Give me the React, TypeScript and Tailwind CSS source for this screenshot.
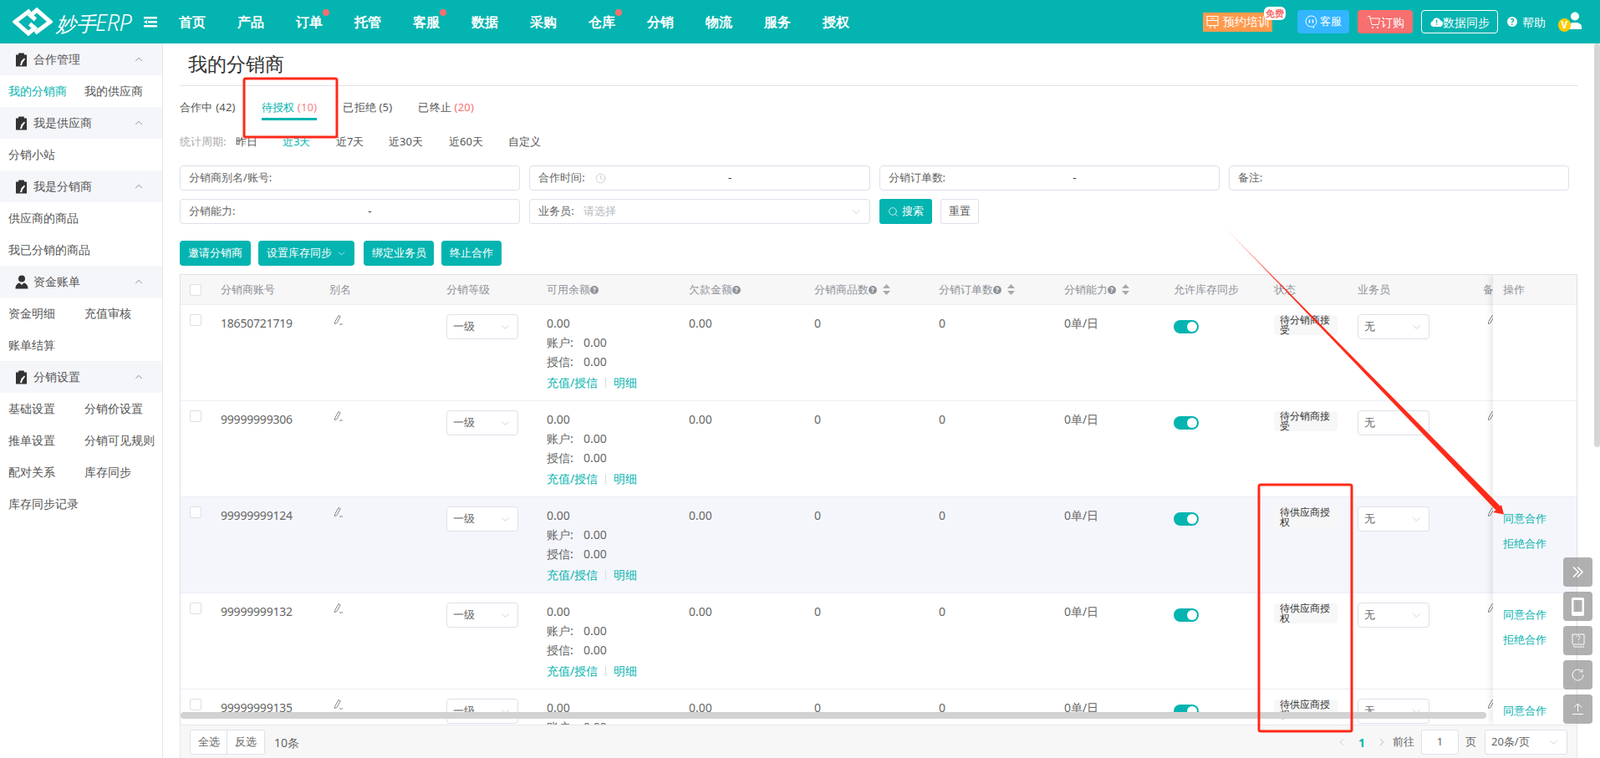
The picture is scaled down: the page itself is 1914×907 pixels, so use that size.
import { ChevronDown, ChevronLeft, ChevronRight, ChevronUp, Search, Clock } from "lucide-react";

const NAV = [
  { t: "首页" }, { t: "产品" }, { t: "订单", dot: true }, { t: "托管" }, { t: "客服", dot: true }, { t: "数据" },
  { t: "采购" }, { t: "仓库", dot: true }, { t: "分销" }, { t: "物流" }, { t: "服务" }, { t: "授权" },
];

const SIDE = [
  { title: "合作管理", icon: "clip", rows: [["我的分销商", "我的供应商"]] },
  { title: "我是供应商", icon: "clip", rows: [["分销小站"]] },
  { title: "我是分销商", icon: "clip", rows: [["供应商的商品"], ["我已分销的商品"]] },
  { title: "资金账单", icon: "user", rows: [["资金明细", "充值审核"], ["账单结算"]] },
  { title: "分销设置", icon: "clip", rows: [["基础设置", "分销价设置"], ["推单设置", "分销可见规则"], ["配对关系", "库存同步"], ["库存同步记录"]] },
];

const ROWS = [
  { id: "18650721719", status: "待分销商接受", ops: false },
  { id: "99999999306", status: "待分销商接受", ops: false },
  { id: "99999999124", status: "待供应商授权", ops: true, hover: true },
  { id: "99999999132", status: "待供应商授权", ops: true },
  { id: "99999999135", status: "待供应商授权", ops: true },
];

const ClipIcon = () => (
  <svg width="15" height="17" viewBox="0 0 15 17">
    <rect x="1" y="2.500" width="13" height="14" fill="#333" />
    <rect x="4" y="0.500" width="7" height="4" rx="1" fill="#333" />
    <path d="M6 15l1.500-5L11 6.500l1 1.200L9 12l-1 3.200z" fill="#fff" />
  </svg>
);

const UserIcon = () => (
  <svg width="16" height="17" viewBox="0 0 16 17">
    <circle cx="8" cy="4.500" r="4" fill="#333" />
    <path d="M0.500 16.500c0-4 2-6.500 5-7L8 12l2.500-2.500c3 .5 5 3 5 7z" fill="#333" />
  </svg>
);

const Pencil = () => (
  <svg width="12" height="13" viewBox="0 0 12 13" fill="none" stroke="#777" strokeWidth="0.9">
    <path d="M1.500 9.500L6 1.500l2.200 1.300-4.400 7.800-2.300.9z" />
    <path d="M7 12h4" />
  </svg>
);

const Help = () => (
  <span className="inline-flex h-[10px] w-[10px] items-center justify-center rounded-full bg-[#8f9299] text-[8px] font-bold leading-none text-white">?</span>
);

const Sort = () => (
  <svg className="ml-[7px]" width="9" height="13" viewBox="0 0 9 13" fill="#a6a9ad">
    <path d="M4.500 0L9 5H0z" />
    <path d="M4.500 13L0 8h9z" />
  </svg>
);

const SmallSelect = ({ label, w }: { label: string; w: string }) => (
  <div className={`flex h-[30px] items-center justify-between rounded-[4px] border border-[#dfe0ea] bg-white pl-[7px] pr-[7px] text-[13px] text-[#666] ${w}`}>
    <span>{label}</span>
    <ChevronDown size={15} strokeWidth={1} className="text-[#b5b8c0]" />
  </div>
);

const Box = ({ children, className = "" }: { children?: React.ReactNode; className?: string }) => (
  <div className={`flex h-[30px] items-center rounded-[4px] border border-[#dfe0ea] bg-white pl-[10px] text-[13px] text-[#666] ${className}`}>
    {children}
  </div>
);

const Dash = () => <span className="flex-1 pr-[18px] text-center text-[#333]">-</span>;

const Tool = ({ children }: { children: React.ReactNode }) => (
  <div className="flex h-[35px] w-[35px] items-center justify-center rounded-[4px] bg-[#8f8f8f]/70">{children}</div>
);

function Header() {
  return (
    <header className="flex h-[52px] shrink-0 items-center bg-[#04b4b0] text-white">
      <svg className="ml-[15px]" width="48" height="34" viewBox="0 0 48 34" fill="none" stroke="#fff" strokeWidth="5">
        <path d="M21 3.500L3 17l16 14 7.500-6.500-6-5" />
        <path d="M27 30.500L45 17 29 3l-7.500 6.500 6 5" />
      </svg>
      <span className="ml-[4px] w-[93px] whitespace-nowrap text-[27px] font-light italic leading-none tracking-[-0.5px]">
        <span className="text-[24px]">妙手</span>ERP
      </span>
      <svg className="ml-[12px]" width="16" height="13" viewBox="0 0 16 13" fill="#fff">
        <rect x="0" y="0" width="16" height="2.500" />
        <rect x="5" y="5" width="11" height="2.500" />
        <rect x="0" y="10" width="16" height="2.500" />
        <path d="M0 6.200L4 4v4.500z" />
      </svg>
      <nav className="ml-[26px] flex gap-[38px]">
        {NAV.map((n) => (
          <span key={n.t} className="relative text-[16px] font-bold leading-[24px]">
            {n.t}
            {n.dot && <i className="absolute right-[-8px] top-[-3px] h-[8px] w-[8px] rounded-full bg-[#f76f6f]" />}
          </span>
        ))}
      </nav>
      <div className="ml-auto mr-[22px] flex items-center">
        <div className="relative flex h-[23px] w-[83px] items-center gap-[5px] bg-[#ff9a4d] pl-[4px] text-[14px] leading-none">
          <svg width="15" height="17" viewBox="0 0 15 17" fill="none" stroke="#fff" strokeWidth="1.100">
            <path d="M1 1.500h13v11H1zM1 6.500h13M4 16l2-3.500M11 16l-2-3.500M5 4h5" />
          </svg>
          <span>预约培训</span>
          <span className="absolute right-[-16px] top-[-7px] flex h-[16px] w-[26px] items-center justify-center rounded-[6px] bg-white text-[11px] font-bold text-[#f76f6f]">免费</span>
        </div>
        <div className="ml-[30px] flex h-[28px] w-[62px] items-center justify-center gap-[3px] rounded-[4px] bg-[#33b5ff] text-[13px]">
          <svg width="15" height="16" viewBox="0 0 15 16" fill="none" stroke="#fff">
            <path d="M7.500 1a6.500 6.500 0 1 0 0 13h2l1 1.500v-2.300A6.500 6.500 0 0 0 7.500 1z" />
            <path d="M5.500 5.500v4M9.500 5.500v4" strokeWidth="1.500" />
          </svg>
          客服
        </div>
        <div className="ml-[10px] flex h-[28px] w-[66px] items-center justify-center rounded-[4px] bg-[#f76f6f] text-[14px]">
          <svg width="17" height="17" viewBox="0 0 17 17" fill="none" stroke="#fff" strokeWidth="1">
            <path d="M1 1.500h2.500l2.500 10h8l1.500-7.500H4.500" />
            <circle cx="7" cy="15" r="0.700" fill="#fff" />
            <circle cx="13" cy="15" r="0.700" fill="#fff" />
          </svg>
          订购
        </div>
        <div className="ml-[10px] flex h-[28px] w-[92px] items-center justify-center rounded-[4px] border border-white text-[14px]">
          <svg width="15" height="12" viewBox="0 0 15 12" fill="#fff">
            <path d="M3.500 12a3.400 3.400 0 0 1-.5-6.700A4.700 4.700 0 0 1 12 4.500 3.800 3.800 0 0 1 11.500 12z" />
            <rect x="7" y="3.500" width="1.300" height="4" fill="#04b4b0" />
            <rect x="7" y="8.500" width="1.300" height="1.300" fill="#04b4b0" />
          </svg>
          数据同步
        </div>
        <span className="ml-[11px] flex h-[12px] w-[12px] items-center justify-center rounded-full bg-white text-[10px] font-bold leading-none text-[#04b4b0]">?</span>
        <span className="ml-[6px] text-[14px]">帮助</span>
        <div className="relative ml-[15px] h-[24px] w-[28px]">
          <svg className="absolute right-0 top-0" width="16" height="21" viewBox="0 0 16 21" fill="#fff">
            <circle cx="8" cy="5.500" r="5" />
            <path d="M0 21v-3c0-3 3-5 8-5s8 2 8 5v3z" />
          </svg>
          <span className="absolute left-0 top-[8px] flex h-[16px] w-[15px] items-center justify-center rounded-full bg-[#ffcc00] text-[12px] font-bold leading-none text-white">V</span>
        </div>
      </div>
    </header>
  );
}

function Sidebar() {
  return (
    <aside className="w-[195px] shrink-0 border-r border-[#e4e5ea] text-[14px] text-[#555]">
      {SIDE.map((s) => (
        <div key={s.title}>
          <div className="flex h-[38px] items-center bg-[#f5f6fa] pl-[18px] pr-[21px]">
            <span className="flex w-[22px] items-center">{s.icon === "clip" ? <ClipIcon /> : <UserIcon />}</span>
            <span className="flex-1 pb-[2px]">{s.title}</span>
            <ChevronUp size={14} strokeWidth={1.2} className="text-[#666]" />
          </div>
          {s.rows.map((r) => (
            <div key={r[0]} className="flex h-[38px] items-center whitespace-nowrap pb-[2px] pl-[10px]">
              {r.map((item, i) => (
                <span key={item} className={`${i === 0 ? "w-[91px]" : ""} ${item === "我的分销商" ? "text-[#04b4b0]" : ""}`}>
                  {item}
                </span>
              ))}
            </div>
          ))}
        </div>
      ))}
    </aside>
  );
}

function Filters() {
  return (
    <div className="mt-[17px] grid grid-cols-4 gap-x-[11px] gap-y-[10px] pr-[10px]">
      <Box>分销商别名/账号:</Box>
      <Box>
        合作时间:
        <Clock size={13} strokeWidth={1} className="ml-[12px] text-[#aaa]" />
        <Dash />
      </Box>
      <Box>
        分销订单数:
        <Dash />
      </Box>
      <Box>备注:</Box>
      <Box>
        分销能力:
        <Dash />
      </Box>
      <Box className="pr-[8px]">
        业务员:
        <span className="ml-[11px] flex-1 text-[#b5b8c0]">请选择</span>
        <ChevronDown size={15} strokeWidth={1} className="text-[#b5b8c0]" />
      </Box>
      <div className="col-span-2 flex gap-[10px]">
        <button className="flex h-[30px] w-[63px] items-center justify-center gap-[4px] rounded-[3px] bg-[#04b4b0] text-[13px] text-white">
          <Search size={13} strokeWidth={1.3} />
          搜索
        </button>
        <button className="h-[30px] w-[46px] rounded-[3px] border border-[#dfe0ea] text-[13px] text-[#555]">重置</button>
      </div>
    </div>
  );
}

function Table() {
  return (
    <div className="relative mt-[10px] h-[539px] overflow-hidden border-x border-t border-[#dfe0ea] text-[13px] text-[#666]">
      <div className="flex h-[36px] items-center border-b border-[#ebeef5] bg-[#f7f7f7] font-medium text-[#909399]">
        <div className="w-[48px] pl-[11px]">
          <span className="block h-[14px] w-[14px] rounded-[2px] border border-[#dcdfe6] bg-white" />
        </div>
        <div className="w-[130px]">分销商账号</div>
        <div className="w-[140px]">别名</div>
        <div className="w-[120px]">分销等级</div>
        <div className="flex w-[170px] items-center">可用余额<Help /></div>
        <div className="flex w-[150px] items-center">欠款金额<Help /></div>
        <div className="flex w-[149px] items-center">分销商品数<Help /><Sort /></div>
        <div className="flex w-[150px] items-center">分销订单数<Help /><Sort /></div>
        <div className="flex w-[131px] items-center">分销能力<Help /><Sort /></div>
        <div className="w-[120px]">允许库存同步</div>
        <div className="w-[100px]">状态</div>
        <div className="w-[150px]">业务员</div>
        <div className="whitespace-nowrap">备注</div>
      </div>

      {ROWS.map((r) => (
        <div key={r.id} className={`flex h-[115px] border-b border-[#ebeef5] ${r.hover ? "bg-[#f5f6fb]" : "bg-white"}`}>
          <div className="w-[48px] pl-[11px] pt-[11px]">
            <span className="block h-[14px] w-[14px] rounded-[2px] border border-[#dcdfe6] bg-white" />
          </div>
          <div className="w-[130px] pt-[10px] text-[14px] leading-[24px] tracking-[-0.2px]">{r.id}</div>
          <div className="w-[140px] pl-[5px] pt-[11px]"><Pencil /></div>
          <div className="w-[120px] pt-[11px]"><SmallSelect label="一级" w="w-[86px]" /></div>
          <div className="w-[170px] pt-[10px] text-[14px] leading-[23px]">
            <div>0.00</div>
            <div className="flex"><span className="w-[44px]">账户:</span>0.00</div>
            <div className="flex"><span className="w-[44px]">授信:</span>0.00</div>
            <div className="mt-[2px] flex items-center text-[#04b4b0]">
              <span>充值/授信</span>
              <i className="mx-[9px] h-[12px] w-px bg-[#dcdfe6]" />
              <span>明细</span>
            </div>
          </div>
          <div className="w-[150px] pt-[10px] text-[14px] leading-[23px]">0.00</div>
          <div className="w-[149px] pt-[10px] text-[14px] leading-[23px]">0</div>
          <div className="w-[150px] pt-[10px] text-[14px] leading-[23px]">0</div>
          <div className="w-[131px] pt-[10px] text-[14px] leading-[23px]">0单/日</div>
          <div className="w-[120px] pt-[18px]">
            <div className="relative h-[16px] w-[30px] rounded-full bg-[#04b4b0]">
              <i className="absolute right-[2px] top-[2px] h-[12px] w-[12px] rounded-full bg-white" />
            </div>
          </div>
          <div className="w-[100px] pt-[12px]">
            <div className="h-[24px] w-[76px] rounded-[4px] bg-[#f7f7f7] px-[7px] text-[12px] leading-[12px] text-[#333]">{r.status}</div>
          </div>
          <div className="w-[150px] pt-[11px]"><SmallSelect label="无" w="w-[86px]" /></div>
          <div className="pl-[5px] pt-[11px]"><Pencil /></div>
        </div>
      ))}

      <div className="absolute bottom-0 right-0 top-0 w-[100px] bg-white shadow-[-4px_0_6px_rgba(0,0,0,0.07)]">
        <div className="flex h-[36px] items-center border-b border-[#ebeef5] bg-[#f7f7f7] pl-[12px] font-medium text-[#909399]">操作</div>
        {ROWS.map((r) => (
          <div key={r.id} className={`h-[115px] border-b border-[#ebeef5] pl-[12px] pt-[14px] leading-[22px] text-[#04b4b0] ${r.hover ? "bg-[#f5f6fb]" : ""}`}>
            {r.ops && (
              <>
                <div>同意合作</div>
                <div className="mt-[8px]">拒绝合作</div>
              </>
            )}
          </div>
        ))}
      </div>
      <div className="absolute bottom-[7px] left-0 h-[8px] w-[1562px] rounded-full bg-[#d2d2d2]" />
    </div>
  );
}

function Footer() {
  return (
    <div className="flex h-[41px] items-center border-x border-t border-[#e6e7ec] bg-[#f7f7f7] pl-[11px] pr-[11px] text-[13px] text-[#666]">
      <div className="flex h-[30px] rounded-[3px] border border-[#dfe0ea] bg-white">
        <span className="flex w-[44px] items-center justify-center border-r border-[#dfe0ea]">全选</span>
        <span className="flex w-[44px] items-center justify-center">反选</span>
      </div>
      <span className="ml-[11px] text-[14px]">10条</span>
      <div className="ml-auto flex items-center">
        <ChevronLeft size={14} strokeWidth={1} className="text-[#aaa]" />
        <span className="mx-[13px] text-[14px] font-bold text-[#04b4b0]">1</span>
        <ChevronRight size={14} strokeWidth={1} className="text-[#888]" />
        <span className="ml-[6px]">前往</span>
        <div className="ml-[8px] flex h-[30px] w-[45px] items-center justify-center rounded-[3px] border border-[#dfe0ea] bg-white">1</div>
        <span className="ml-[8px]">页</span>
        <div className="ml-[10px] flex h-[30px] w-[99px] items-center justify-between rounded-[3px] border border-[#dfe0ea] bg-white pl-[7px] pr-[8px]">
          20条/页
          <ChevronDown size={15} strokeWidth={1} className="text-[#b5b8c0]" />
        </div>
      </div>
    </div>
  );
}

export default function App() {
  return (
    <div className="relative flex h-[907px] w-[1914px] flex-col overflow-hidden bg-white font-['Liberation_Sans','Noto_Sans_CJK_SC',sans-serif]">
      <Header />
      <div className="flex min-h-0 flex-1">
        <Sidebar />
        <main className="min-w-0 flex-1 pl-[20px] pr-[20px]">
          <div className="flex h-[51px] items-center border-b border-[#e0e1e8] pb-[2px] pl-[10px] text-[23px] text-[#333]">我的分销商</div>
          <div className="mt-[14px] flex gap-[31px] text-[13px] leading-[22px] tracking-[0.2px] text-[#555]">
            <span>合作中 (42)</span>
            <span className="relative text-[#04b4b0]">
              待授权 <span className="text-[#f7818a]">(10)</span>
              <i className="absolute bottom-[-5px] left-0 h-[3px] w-full bg-[#04b4b0]" />
            </span>
            <span>已拒绝 (5)</span>
            <span>已终止 <span className="text-[#f76f6f]">(20)</span></span>
          </div>
          <div className="mt-[20px] flex h-[22px] items-center text-[13px] text-[#555]">
            <span className="w-[67px] text-[#aaa]">统计周期:</span>
            <span className="w-[56px]">昨日</span>
            <span className="w-[64px] text-[#04b4b0]">近3天</span>
            <span className="w-[63px]">近7天</span>
            <span className="w-[72px]">近30天</span>
            <span className="w-[71px]">近60天</span>
            <span>自定义</span>
          </div>
          <Filters />
          <div className="mt-[20px] flex gap-[9px] text-[13px] text-white">
            <button className="h-[30px] w-[85px] rounded-[4px] bg-[#04b4b0]">邀请分销商</button>
            <button className="flex h-[30px] w-[115px] items-center justify-center gap-[5px] rounded-[4px] bg-[#04b4b0]">
              设置库存同步
              <ChevronDown size={13} strokeWidth={1.2} />
            </button>
            <button className="ml-[2px] h-[30px] w-[84px] rounded-[4px] bg-[#04b4b0]">绑定业务员</button>
            <button className="h-[30px] w-[72px] rounded-[4px] bg-[#04b4b0]">终止合作</button>
          </div>
          <Table />
          <Footer />
        </main>
        <div className="h-[483px] w-[7px] shrink-0 rounded-full bg-[#d6d6d6]" />
      </div>

      <div className="absolute right-[9px] top-[667px] flex flex-col gap-[6px] text-white">
        <Tool>
          <svg width="15" height="15" viewBox="0 0 15 15" fill="none" stroke="#fff" strokeWidth="1.600">
            <path d="M2 1.500l6 6-6 6M7 1.500l6 6-6 6" />
          </svg>
        </Tool>
        <Tool>
          <svg width="15" height="22" viewBox="0 0 15 22" fill="#fff">
            <path fillRule="evenodd" d="M2 0h11a2 2 0 0 1 2 2v18a2 2 0 0 1-2 2H2a2 2 0 0 1-2-2V2a2 2 0 0 1 2-2zm.5 3v14h10V3z" />
          </svg>
        </Tool>
        <Tool>
          <svg width="16" height="17" viewBox="0 0 16 17" fill="none" stroke="#fff">
            <path d="M1 13V1h14v12H3a2 2 0 0 0 0 3h12" />
            <path d="M6 4.500c0-2.500 4-2.500 4 0 0 1.500-2 1.500-2 3.500M8 9.500v1" />
          </svg>
        </Tool>
        <Tool>
          <svg width="15" height="15" viewBox="0 0 15 15" fill="none" stroke="#fff">
            <path d="M12.500 3.500A6.500 6.500 0 1 0 14 7.500" />
            <path d="M9.500 3.700l3.500.3V.5" strokeWidth="0.800" />
          </svg>
        </Tool>
        <Tool>
          <svg width="15" height="15" viewBox="0 0 15 15" fill="none" stroke="#fff">
            <path d="M7.500 1v9.500M3 5.500L7.500 1 12 5.500M1 13.500h13" />
          </svg>
        </Tool>
      </div>

      <svg className="pointer-events-none absolute inset-0" width="1914" height="907" viewBox="0 0 1914 907" fill="none">
        <defs>
          <linearGradient id="arrowFade" x1="1464" y1="271" x2="1540" y2="350" gradientUnits="userSpaceOnUse">
            <stop offset="0" stopColor="#ff2a1a" stopOpacity="0.25" />
            <stop offset="1" stopColor="#ff2a1a" />
          </linearGradient>
        </defs>
        <rect x="292" y="94" width="111" height="70" rx="2" stroke="#ff2a1a" strokeWidth="3" />
        <rect x="1506" y="580" width="111" height="295" rx="2" stroke="#ff2a1a" strokeWidth="3" />
        <path d="M1464 271L1794.500 605.500L1796 604L1799 615.500L1786 613L1789.500 610.500Z" fill="url(#arrowFade)" />
      </svg>
    </div>
  );
}
